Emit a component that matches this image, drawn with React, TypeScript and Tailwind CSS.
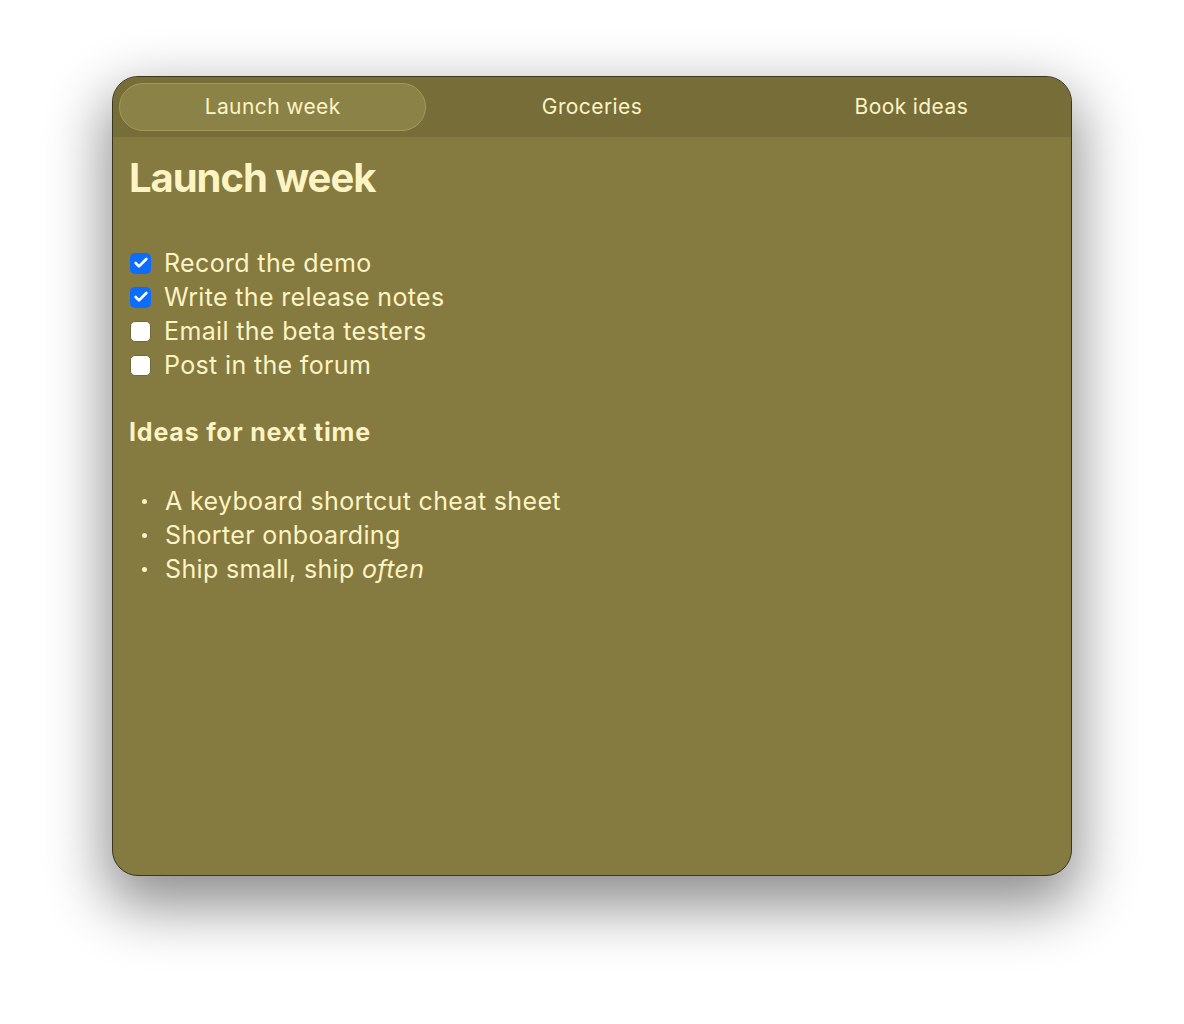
import { Check } from "lucide-react";

const tasks = [
  { label: "Record the demo", done: true },
  { label: "Write the release notes", done: true },
  { label: "Email the beta testers", done: false },
  { label: "Post in the forum", done: false },
];

const tabs = ["Launch week", "Groceries", "Book ideas"];

export default function App() {
  return (
    <div
      className="min-h-[1024px] bg-white flex justify-center pt-[76px]"
      style={{ fontFamily: "Inter, 'Noto Sans', sans-serif" }}
    >
      <div className="w-[960px] h-[800px] rounded-[26px] bg-[#857a40] border border-[#3a3620] overflow-hidden shadow-[0_24px_60px_6px_rgba(0,0,0,0.45)] flex flex-col text-[#fdf4c4]">
        <div className="h-[60px] bg-[#766d39] grid grid-cols-3 shrink-0">
          {tabs.map((t, i) => (
            <div key={t} className="p-[6px] flex">
              <div
                className={
                  i === 0
                    ? "flex-1 rounded-full bg-[#8b8247] border border-[#a39a5c] flex items-center justify-center text-[21px] tracking-[0.4px]"
                    : "flex-1 flex items-center justify-center text-[21px] tracking-[0.4px]"
                }
              >
                {t}
              </div>
            </div>
          ))}
        </div>
        <div className="px-[16px] pt-[17px]">
          <h1 className="text-[40px] leading-[48px] font-bold tracking-[-1.05px]">Launch week</h1>
          <div className="mt-[44px] text-[25px] leading-[34px] tracking-[0.35px]">
            {tasks.map((t) => (
              <div key={t.label} className="flex items-center gap-[13px]">
                {t.done ? (
                  <span className="ml-[1px] w-[21px] h-[21px] rounded-[5px] bg-[#0b6cfe] flex items-center justify-center">
                    <Check className="w-[16px] h-[16px] text-white" strokeWidth={4} />
                  </span>
                ) : (
                  <span className="ml-[1px] w-[21px] h-[21px] rounded-[5px] bg-white border border-[#6f6838]" />
                )}
                <span>{t.label}</span>
              </div>
            ))}
          </div>
          <h2 className="mt-[33px] text-[25px] leading-[34px] font-bold tracking-[0.8px]">Ideas for next time</h2>
          <ul className="mt-[35px] text-[25px] leading-[34px] tracking-[0.35px]">
            {[
              <>A keyboard shortcut cheat sheet</>,
              <>Shorter onboarding</>,
              <>
                Ship small, ship <em>often</em>
              </>,
            ].map((c, i) => (
              <li key={i} className="flex items-center">
                <span className="w-[36px] flex pl-[13px]">
                  <span className="w-[5px] h-[5px] rounded-full bg-[#fdf4c4]" />
                </span>
                <span>{c}</span>
              </li>
            ))}
          </ul>
        </div>
      </div>
    </div>
  );
}
